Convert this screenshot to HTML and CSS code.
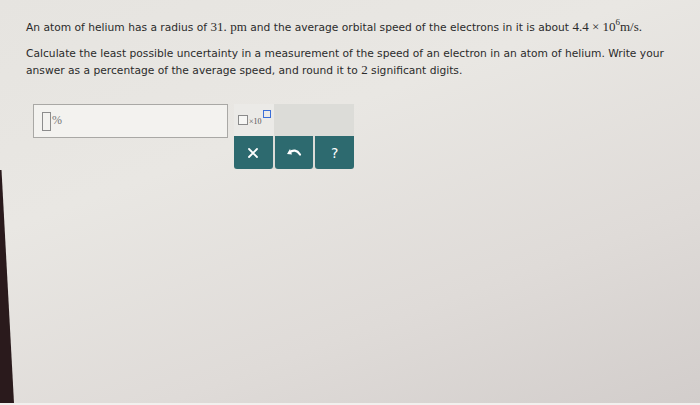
FILE: index.html
```html
<!DOCTYPE html>
<html>
<head>
<meta charset="utf-8">
<link rel="stylesheet" href="styles.css">
</head>
<body>
<div class="screen">
  <div class="question">
    <p class="line">An atom of helium has a radius of <span class="m">31.</span> <span class="m">pm</span> and the average orbital speed of the electrons in it is about <span class="m">4.4 × 10<sup>6</sup>m/s.</span></p>
    <p class="para">Calculate the least possible uncertainty in a measurement of the speed of an electron in an atom of helium. Write your answer as a percentage of the average speed, and round it to <span class="m">2</span> significant digits.</p>
  </div>
  <div class="answer">
    <div class="inputbox">
      <span class="cursor"></span><span class="pct">%</span>
    </div>
    <div class="keypad">
      <div class="keyrow">
        <div class="sci"><span class="sq"></span><span class="x10">×10</span><span class="sqsup"></span></div>
        <div class="blank"></div>
      </div>
      <div class="btnrow">
        <button class="btn">
          <svg width="12" height="12" viewBox="0 0 12 12"><path d="M2 2 L10 10 M10 2 L2 10" stroke="#fff" stroke-width="1.8" stroke-linecap="round"/></svg>
        </button>
        <button class="btn">
          <svg width="16" height="10" viewBox="0 0 16 10"><path d="M4 1 L1 6 L6 6.5 Z" fill="#fff"/><path d="M3.5 4.5 C7 1.5 11 2 14 6.5" stroke="#fff" stroke-width="2.2" fill="none" stroke-linecap="round"/></svg>
        </button>
        <button class="btn q">?</button>
      </div>
    </div>
  </div>
  <svg class="edge" width="20" height="405" viewBox="0 0 20 405"><polygon points="0,170 1.5,170 14,403 0,403" fill="#2a1a1c"/></svg>
  <div class="bottomline"></div>
</div>
</body>
</html>
```
FILE: styles.css
```css
* { box-sizing: border-box; }
html, body { margin: 0; padding: 0; }
body { width: 700px; height: 405px; overflow: hidden; }
.screen {
  position: relative;
  width: 700px;
  height: 405px;
  background: linear-gradient(160deg, #e6e4e0 0%, #e9e7e3 35%, #dfdbd8 70%, #d2cdcb 100%);
  padding: 19px 0 0 26px;
  font-family: "DejaVu Sans", Verdana, sans-serif;
  font-size: 10.7px;
  color: #2b2b2b;
}
.question { width: 640px; }
.question p { margin: 0; line-height: 17px; }
.para { margin-top: 9px !important; }
.m { font-family: "Liberation Serif", "Times New Roman", serif; font-size: 13px; line-height: 1; }
sup { font-size: 9px; vertical-align: 6px; line-height: 0; }
.answer {
  display: flex;
  margin-top: 25px;
  margin-left: 7px;
  gap: 6px;
}
.inputbox {
  width: 195px;
  height: 34px;
  background: #f3f2ef;
  border: 1px solid #a9a8a5;
  display: flex;
  align-items: center;
  padding-left: 8px;
}
.cursor {
  width: 9px;
  height: 19px;
  border: 1px solid #8c8c8c;
}
.pct { font-family: "Liberation Serif", serif; font-size: 12px; color: #777; margin-left: 1px; margin-top: -2px; }
.keypad {
  width: 120px;
  display: flex;
  flex-direction: column;
}
.keyrow { display: flex; height: 32px; }
.sci {
  width: 40px;
  background: #ebeae7;
  display: flex;
  align-items: center;
  padding-left: 4px;
  position: relative;
}
.sq { width: 10px; height: 10px; border: 1px solid #8a8a8a; background: #f6f6f4; }
.x10 { font-family: "Liberation Serif", serif; font-size: 8px; color: #555; margin-left: 1px; margin-top: 2px; }
.sqsup { width: 8px; height: 8px; border: 1.5px solid #3a6ed8; margin-left: 1px; margin-top: -12px; }
.blank { flex: 1; background: #dcdcd8; }
.btnrow { display: flex; gap: 2px; height: 33px; background: #dcdcd8; }
.btn {
  flex: 1;
  border: none;
  background: #2d6a6f;
  border-radius: 0 0 3px 3px;
  color: #fff;
  display: flex;
  align-items: center;
  justify-content: center;
  padding: 0;
  margin: 0;
}
.btn.q { font-family: "DejaVu Sans", sans-serif; font-size: 14px; font-weight: normal; }
.edge { position: absolute; left: 0; top: 0; }
.bottomline { position: absolute; left: 0; bottom: 0; width: 700px; height: 2px; background: #f2f0ee; }
```
